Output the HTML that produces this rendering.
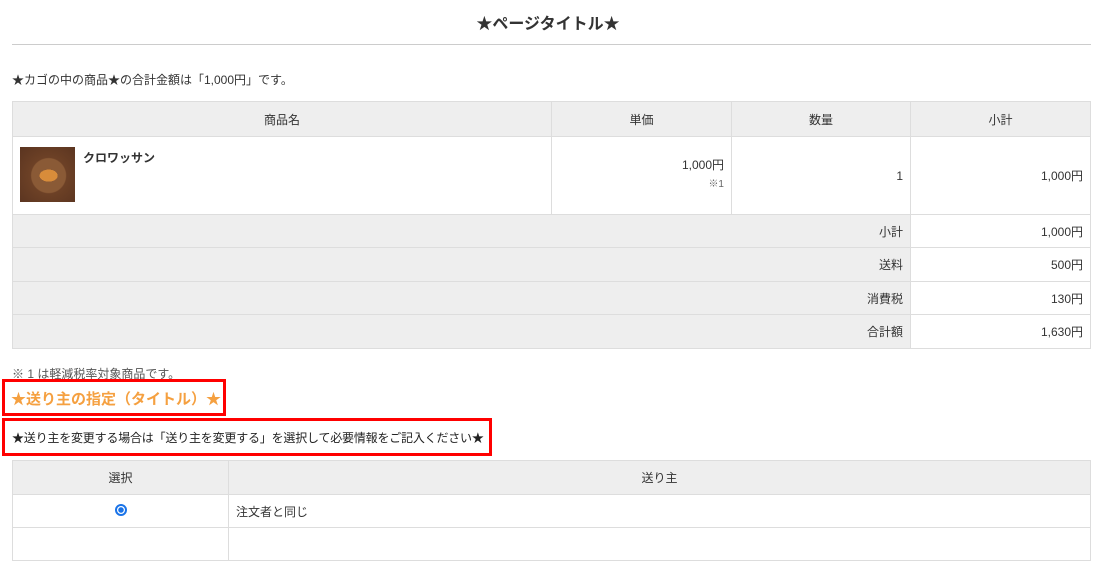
<!DOCTYPE html><html><head><meta charset="utf-8"><style>
body{margin:0;width:1096px;height:534px;overflow:hidden;background:#fff;font-family:"Liberation Sans","Noto Sans CJK JP",sans-serif;color:#333;font-size:12px;position:relative}
.a{position:absolute}
table{border-collapse:collapse;position:absolute;left:12px;width:1079px;table-layout:fixed}
td,th{border:1px solid #ddd;padding:0 7px;font-weight:normal}
th{background:#eee;text-align:center}
.g{background:#eee}
.r{text-align:right}
</style></head><body>
<div class="a" style="left:0;width:1096px;top:10px;text-align:center;font-size:16px;font-weight:bold;color:#333">★ページタイトル★</div>
<div class="a" style="left:12px;width:1079px;top:44px;border-top:1px solid #ccc"></div>
<div class="a" style="left:12px;top:71px">★カゴの中の商品★の合計金額は「1,000円」です。</div>
<table style="top:101px">
<colgroup><col style="width:539px"><col style="width:180px"><col style="width:179px"><col></colgroup>
<tr style="height:35px"><th>商品名</th><th>単価</th><th>数量</th><th>小計</th></tr>
<tr style="height:78px"><td style="vertical-align:top;padding-top:10px"><div style="float:left;width:55px;height:55px;background:radial-gradient(ellipse 9px 6px at 52% 52%,#d88c3a 0 100%,transparent 101%),radial-gradient(circle at 52% 52%,#8a5a36 0 17px,#6d4126 18px,#5a3420);margin-right:8px"></div><b style="display:block;padding-top:2px">クロワッサン</b></td><td class="r" style="vertical-align:middle"><div style="margin-top:-6px">1,000円</div><div style="font-size:10px;color:#666;margin-top:2px">※1</div></td><td class="r">1</td><td class="r">1,000円</td></tr>
<tr style="height:33px"><td colspan="3" class="g r">小計</td><td class="r">1,000円</td></tr>
<tr style="height:34px"><td colspan="3" class="g r">送料</td><td class="r">500円</td></tr>
<tr style="height:33px"><td colspan="3" class="g r">消費税</td><td class="r">130円</td></tr>
<tr style="height:34px"><td colspan="3" class="g r">合計額</td><td class="r">1,630円</td></tr>
</table>
<div class="a" style="left:12px;top:365px;color:#555">※ 1 は軽減税率対象商品です。</div>
<div class="a" style="left:2px;top:379px;width:218px;height:31px;border:3px solid #f00"></div>
<div class="a" style="left:11px;top:388px;font-size:15px;font-weight:bold;color:#f5a040">★送り主の指定（タイトル）★</div>
<div class="a" style="left:2px;top:418px;width:484px;height:32px;border:3px solid #f00"></div>
<div class="a" style="left:12px;top:429px;font-size:12px;letter-spacing:-0.2px;color:#222">★送り主を変更する場合は「送り主を変更する」を選択して必要情報をご記入ください★</div>
<table style="top:460px">
<colgroup><col style="width:216px"><col></colgroup>
<tr style="height:34px"><th>選択</th><th>送り主</th></tr>
<tr style="height:33px"><td style="text-align:center"><span style="display:inline-block;width:8px;height:8px;border-radius:50%;border:2px solid #1a73e8;background:radial-gradient(#1a73e8 0 2.5px,#fff 3px)"></span></td><td>注文者と同じ</td></tr>
<tr style="height:33px"><td></td><td></td></tr>
</table>
</body></html>
